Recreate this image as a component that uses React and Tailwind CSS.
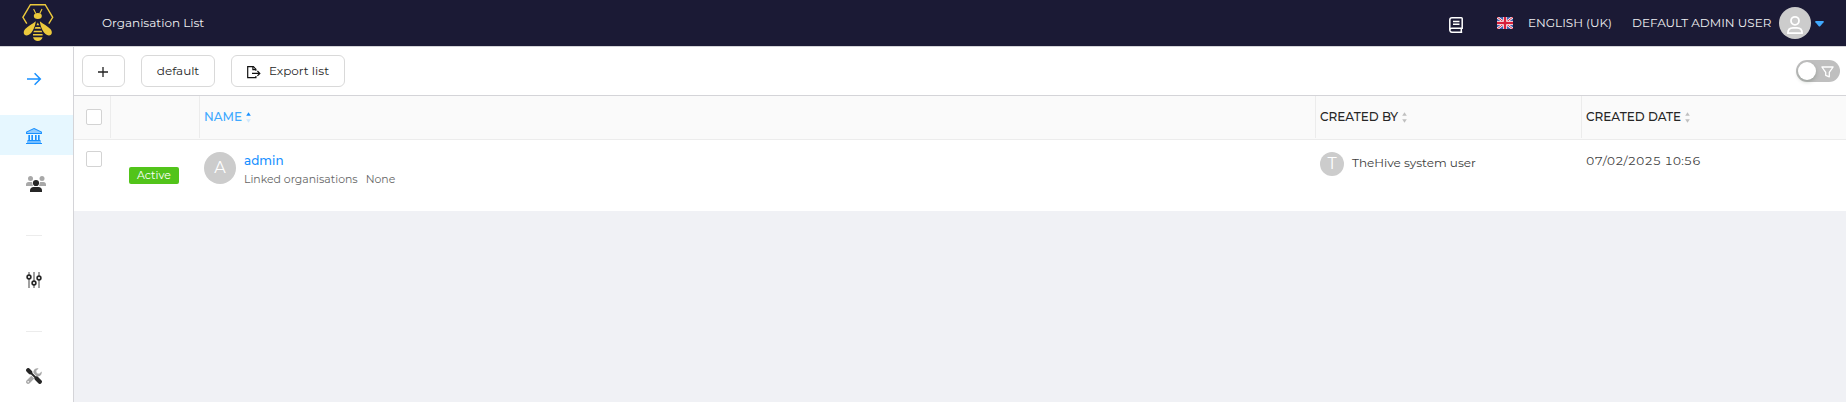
import React from "react";

function BeeLogo() {
  return (
    <svg width="34" height="40" viewBox="0 0 34 40" className="block">
      <path d="M5.8 20.6 L1.9 14.3 L9.4 1.7 H24.2 L31.7 14.3 L27.8 20.6" fill="none" stroke="#ecc93c" strokeWidth="1.4" />
      <path d="M14.8 10.4 L12.6 6 M18.8 10.4 L21 6" fill="none" stroke="#ecc93c" strokeWidth="1.1" />
      <ellipse cx="16.8" cy="13" rx="4" ry="2.9" fill="#ecc93c" />
      <path d="M14.8 18.2 C14.2 24 10.5 32.2 5.7 32.4 C2.2 32.4 2 28.5 4.2 26 C7 23 11.5 21 14.8 18.2Z" fill="#ecc93c" />
      <path d="M18.8 18.2 C19.4 24 23 32.2 27.9 32.4 C31.4 32.4 31.6 28.5 29.4 26 C26.6 23 22 21 18.8 18.2Z" fill="#ecc93c" />
      <path d="M15.4 22.2 L16.8 19.6 L18.2 22.2Z M14.4 24 H19.2 L20 25.7 H13.6Z M13 27.7 H20.6 L21.2 29.3 H12.4Z M12 31 H21.6 V32.6 H12Z M12 34.2 H21.6 C21 36.6 19.2 38 16.8 38 S12.6 36.6 12 34.2Z" fill="#ecc93c" />
    </svg>
  );
}

function ArrowIcon() {
  return (
    <svg width="16" height="16" viewBox="0 0 16 16" fill="none" stroke="#1890ff" strokeWidth="1.5" className="block">
      <path d="M1 8 H14 M8.6 2.3 L14.3 8 L8.6 13.7" />
    </svg>
  );
}

function UserIcon() {
  return (
    <svg width="18" height="20" viewBox="0 0 18 20" fill="none" stroke="#fff" strokeWidth="1.8">
      <circle cx="9" cy="5.8" r="4" />
      <path d="M1.9 18.2 C1.9 14.6 4.3 12.9 7 12.9 H11 C13.7 12.9 16.1 14.6 16.1 18.2Z" strokeLinejoin="round" />
    </svg>
  );
}

function FilterIcon() {
  return (
    <svg width="13" height="12" viewBox="0 0 13 12" fill="none" stroke="#fff" strokeWidth="1.3" strokeLinejoin="round" className="mt-[2px]">
      <path d="M.9 1 H12.1 L8.3 6.4 V10.8 L4.7 9.3 V6.4Z" />
    </svg>
  );
}

function BankIcon() {
  return (
    <svg width="16" height="16" viewBox="0 0 16 16">
      <path d="M8 1 L15 4.2 V5.2 H1 V4.2Z" fill="#8fcbff" />
      <path d="M8 .6 L15.4 4 V5.5 H.6 V4Z" fill="none" stroke="#1890ff" strokeWidth="1.1" />
      <path d="M2 7 H4 V12 H2Z M5 7 H7 V12 H5Z M9 7 H11 V12 H9Z M12 7 H14 V12 H12Z" fill="#5fb3ff" />
      <path d="M3.5 7v5M6.5 7v5M9.5 7v5M12.5 7v5" stroke="#1890ff" strokeWidth="1" />
      <path d="M1.5 12 H14.5 V13 H1.5Z M0 15 H16 V16 H0Z" fill="#1890ff" />
      <path d="M1 13 H15 V15 H1Z" fill="#74bdff" />
    </svg>
  );
}

function UsersIcon() {
  return (
    <svg width="20" height="16" viewBox="0 0 20 16">
      <g fill="#a8a8a8">
        <circle cx="4.5" cy="2.5" r="2.5" />
        <circle cx="16" cy="2.5" r="2.5" />
        <path d="M0 10 V8.5 C0 7 1 6 2.5 6 H5 C6 6 6.3 6.4 6.3 7.2 C6.3 8.4 6.7 9.3 7 10Z M20 10 V8.5 C20 7 19 6 17.5 6 H15 C14 6 13.7 6.4 13.7 7.2 C13.7 8.4 13.3 9.3 13 10Z" />
      </g>
      <g fill="#262626">
        <circle cx="10" cy="7" r="3.1" />
        <path d="M4 16 V14.5 C4 12.3 5.5 11 7.5 11 H12.5 C14.5 11 16 12.3 16 14.5 V16Z" />
      </g>
    </svg>
  );
}

function SlidersIcon() {
  return (
    <svg width="16" height="16" viewBox="0 0 16 16">
      <path d="M3 0V16M8 0V16M13 0V16" stroke="#a0a0a0" strokeWidth="2" />
      <g fill="#fff" stroke="#262626" strokeWidth="1.6">
        <circle cx="3" cy="5" r="1.9" />
        <circle cx="8" cy="11" r="1.9" />
        <circle cx="13" cy="6" r="1.9" />
      </g>
    </svg>
  );
}

function ToolsIcon() {
  return (
    <svg width="16" height="16" viewBox="0 0 16 16">
      <path d="M15.6 3.4 L13.2 5.8 L10.8 5.2 L10.2 2.8 L12.6 .4 C10.4 -.3 8 .9 7.5 3.2 C7.3 4 7.4 4.8 7.6 5.5 L.8 12.3 C-.2 13.3 -.2 14.5 .6 15.3 C1.4 16.2 2.8 16.2 3.7 15.2 L10.2 8.6 C13 9.5 16.6 7 15.6 3.4Z M2.2 14.5 A.8 .8 0 1 1 2.2 12.9 A.8 .8 0 1 1 2.2 14.5Z" fill="#a8a8a8" fillRule="evenodd" />
      <path d="M4 4 L14 14" stroke="#fff" strokeWidth="3.4" />
      <path d="M2.2 2.2 L4.2 4.2 M10.6 10.6 L13.8 13.8" stroke="#262626" strokeWidth="4.2" strokeLinecap="round" />
      <path d="M4 4 L12 12" stroke="#262626" strokeWidth="1.8" />
    </svg>
  );
}

function ExportIcon() {
  return (
    <svg width="14" height="13" viewBox="0 0 14 13" fill="none" stroke="#111" strokeWidth="1.2" className="mt-[2px]">
      <path d="M8.9 4.8 V3.2 L6.4 .7 H.7 V11.7 H8.9 V10" />
      <path d="M5.9 .7 V3.6 H8.9" />
      <path d="M5 7.4 H12.8 M10.4 5 L12.8 7.4 L10.4 9.8" />
    </svg>
  );
}

function BookIcon() {
  return (
    <svg width="14" height="16" viewBox="0 0 14 16" fill="none" stroke="#fff" strokeWidth="1.5">
      <path d="M13.2 15.2 H3 A2.1 2.1 0 0 1 .8 13.1 V3 A2.2 2.2 0 0 1 3 .8 H12.4 Q13.2 .8 13.2 1.6 V11.2 H3 A2 2 0 0 0 .8 13.2" />
      <path d="M12.3 11.5 V15 M4 4.4 H10.5 M4 7.2 H10.5" />
    </svg>
  );
}

function Flag() {
  return (
    <svg width="16" height="12" viewBox="0 0 16 12">
      <path d="M0 0H16V12H0Z" fill="#3f5fae" />
      <path d="M0 0L16 12M16 0L0 12" stroke="#fff" strokeWidth="2.4" />
      <path d="M0 0L16 12M16 0L0 12" stroke="#d8203a" strokeWidth="1" />
      <path d="M8 0V12M0 6H16" stroke="#fff" strokeWidth="3.8" />
      <path d="M8 0V12M0 6H16" stroke="#d8203a" strokeWidth="2.4" />
    </svg>
  );
}

function Sorter({ active }) {
  return (
    <svg width="5" height="11" viewBox="0 0 5 11" className="shrink-0">
      <path d="M2.5 .2 L4.8 3.8 H.2Z" fill={active ? "#1890ff" : "#bfbfbf"} />
      <path d="M2.5 10.8 L4.8 7.2 H.2Z" fill={active ? "#cfe8fd" : "#bfbfbf"} />
    </svg>
  );
}

function Checkbox() {
  return <span className="block size-4 shrink-0 rounded-[2px] border border-[#d3d3d3] bg-white" />;
}

function Header() {
  return (
    <header className="flex h-[47px] shrink-0 items-start border-b border-[#d4d4d8] bg-[#1b1a35] text-xs leading-[46px] text-[#f0f0f2]">
      <div className="w-[102px] shrink-0 pt-[3px] pl-[21px]"><BeeLogo /></div>
      <span>Organisation List</span>
      <div className="ml-auto flex h-[46px] items-center">
        <div className="mt-1 w-12"><BookIcon /></div>
        <div className="w-[31px]"><Flag /></div>
        <span className="w-[104px] whitespace-nowrap">ENGLISH (UK)</span>
        <span className="w-[147px] whitespace-nowrap">DEFAULT ADMIN USER</span>
        <span className="flex size-8 items-center justify-center rounded-full bg-[#ccc] pt-1">
          <UserIcon />
        </span>
        <svg width="9" height="6" viewBox="0 0 9 6" className="mt-[2px] mr-[22px] ml-1"><path d="M.8 0H8.2Q9.2 .3 8.6 1.2L5.2 5.2Q4.5 6 3.8 5.2L.4 1.2Q-.2 .3 .8 0Z" fill="#40a9ff" /></svg>
      </div>
    </header>
  );
}

function Sidebar() {
  return (
    <nav className="flex w-[74px] shrink-0 flex-col border-r border-[#d4d4d8] bg-white">
      <div className="h-[68px] pt-6 pl-[26px]"><ArrowIcon /></div>
      <div className="h-10 bg-[#e6f7ff] pt-[13px] pl-[26px]"><BankIcon /></div>
      <div className="h-20 pt-[21px] pl-[26px]"><UsersIcon /></div>
      <div className="ml-[26px] h-px w-4 bg-[#ececec]" />
      <div className="h-[95px] pt-9 pl-[26px]"><SlidersIcon /></div>
      <div className="ml-[26px] h-px w-4 bg-[#ececec]" />
      <div className="pt-9 pl-[26px]"><ToolsIcon /></div>
    </nav>
  );
}

function Toolbar() {
  const button = "flex h-8 items-center justify-center rounded-md border border-[#d9d9d9] text-xs text-[#262626]";
  return (
    <div className="flex h-[49px] shrink-0 items-center gap-4 border-b border-[#d4d4d8] bg-white pr-[6px] pl-2">
      <button className={button + " w-[43px] pt-[2px] pr-[1px]"}>
        <svg width="10" height="10" viewBox="0 0 10 10"><path d="M5 0V10M0 5H10" stroke="#222" strokeWidth="1.3" /></svg>
      </button>
      <button className={button + " w-[74px]"}>default</button>
      <button className={button + " w-[114px] gap-2"}><ExportIcon />Export list</button>
      <span className="ml-auto flex h-[22px] w-11 items-center justify-between rounded-full bg-[#bfbfbf] pr-[6px] pl-[2px]">
        <span className="size-[18px] rounded-full bg-white shadow-[0_2px_4px_rgba(0,35,11,0.2)]" />
        <FilterIcon />
      </span>
    </div>
  );
}

const columns = "grid grid-cols-[37px_89px_1116px_266px_1fr]";

function Table() {
  const head = "flex items-center gap-1 border-r border-[#ececec] pl-1";
  return (
    <div className="shrink-0 bg-white">
      <div className={columns + " h-11 border-b border-[#ececec] bg-[#fafafa] pb-[1px] text-xs font-medium text-[#262626]"}>
        <div className="flex items-center border-r border-[#ececec] pl-3"><Checkbox /></div>
        <div className="border-r border-[#ececec]" />
        <div className={head + " text-[#40a9ff]"}><span>NAME</span><Sorter active /></div>
        <div className={head}><span>CREATED BY</span><Sorter /></div>
        <div className="flex items-center gap-1 pl-1"><span>CREATED DATE</span><Sorter /></div>
      </div>
      <div className={columns + " h-[71px] text-xs text-[#404040]"}>
        <div className="pt-[11px] pl-3"><Checkbox /></div>
        <div className="pt-[27px] pl-[18px]">
          <span className="flex h-[17px] w-[50px] items-center justify-center rounded-[2px] bg-[#52c41a] text-[11px] text-white">Active</span>
        </div>
        <div className="flex gap-2 pt-3 pl-1">
          <span className="flex size-8 items-center justify-center rounded-full bg-[#ccc] text-base text-white">A</span>
          <div className="flex flex-col">
            <a className="h-[19px] text-xs leading-[18px] font-medium text-[#1890ff]">admin</a>
            <div className="flex gap-2 text-[10.9px] leading-4 text-[#666]"><span>Linked organisations</span><span>None</span></div>
          </div>
        </div>
        <div className="flex items-start pt-3 pl-1">
          <span className="flex size-6 items-center justify-center rounded-full bg-[#ccc] text-base text-white">T</span>
          <span className="ml-2 leading-[22px]">TheHive system user</span>
        </div>
        <div className="pt-3 pl-1 leading-[18px] tabular-nums">07/02/2025 10:56</div>
      </div>
    </div>
  );
}

export default function App() {
  return (
    <div className="flex h-[402px] w-[1846px] flex-col overflow-hidden bg-[#f0f1f5] font-['Montserrat','Inter',sans-serif]">
      <Header />
      <div className="flex min-h-0 flex-1">
        <Sidebar />
        <main className="flex min-w-0 flex-1 flex-col">
          <Toolbar />
          <Table />
        </main>
      </div>
    </div>
  );
}
